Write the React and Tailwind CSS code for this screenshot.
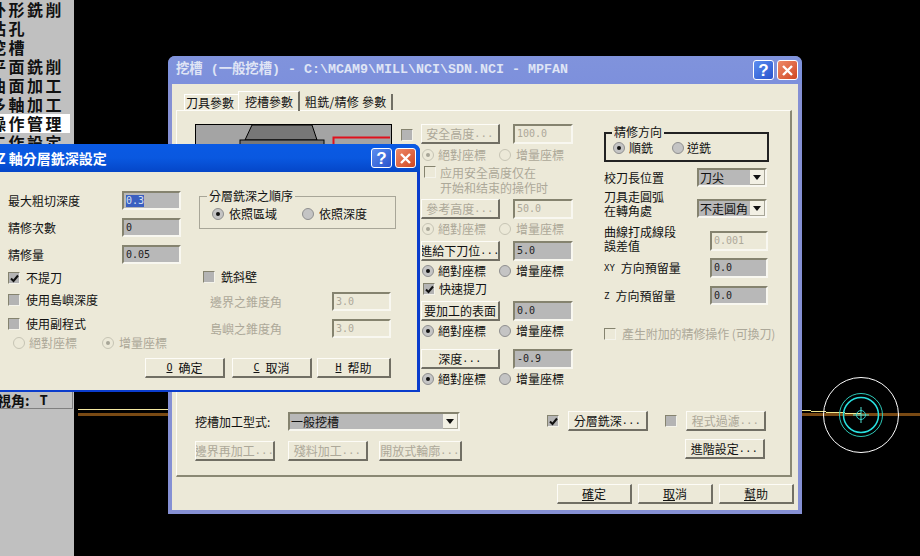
const cjk = "font-['Noto_Sans_CJK_TC','Liberation_Sans',sans-serif]";
const mono = "font-['DejaVu_Sans_Mono','Noto_Sans_CJK_TC',monospace]";

function Btn({ w = 79, h = 20, off, children, dots, className = "" }) {
  return (
    <div
      style={{ width: w, height: h }}
      className={`flex shrink-0 items-center justify-center whitespace-nowrap overflow-hidden bg-[#ece9d8] border border-t-[#fdfcf7] border-l-[#fdfcf7] border-r-2 border-b-2 border-r-[#716f64] border-b-[#716f64] text-[12px] leading-[14px] ${off ? "text-[#aca899]" : "text-[#111]"} ${className}`}
    >
      {children}
      {dots && <span className={`${mono} text-[10px] tracking-[0.5px]`}>...</span>}
    </div>
  );
}

function Field({ w = 60, h = 20, off, sel, value, className = "" }) {
  return (
    <div
      style={{ width: w, height: h }}
      className={`flex shrink-0 items-center pl-[2px] border-2 border-t-[#85836f] border-l-[#85836f] border-r-[#f8f7f0] border-b-[#f8f7f0] ${mono} text-[10px] leading-[12px] ${off ? "bg-[#ece9d8] text-[#aca899]" : "bg-[#b8b8b8] text-[#222]"} ${className}`}
    >
      <span className={sel ? "bg-[#3a5fc0] text-[#d8e0f0]" : ""}>{value}</span>
    </div>
  );
}

function Check({ on, off, className = "" }) {
  return (
    <div
      className={`flex h-[12px] w-[12px] shrink-0 items-center justify-center border border-t-[#85836f] border-l-[#85836f] border-r-[#f4f3ea] border-b-[#f4f3ea] ${off ? "bg-[#ece9d8]" : "bg-[#b4b4b4]"} ${className}`}
    >
      {on && (
        <svg width="9" height="9" viewBox="0 0 9 9">
          <path d="M1 4.5 L3.5 7 L8 1.5" fill="none" stroke="#111" strokeWidth="2" />
        </svg>
      )}
    </div>
  );
}

function Radio({ on, off }) {
  return (
    <div
      className={`flex h-[12px] w-[12px] shrink-0 items-center justify-center rounded-full border ${off ? "border-[#c6c4b4] bg-[#ece9d8]" : "border-[#8f8f8f] bg-[#c4c4c4]"}`}
    >
      {on && <div className={`h-[4px] w-[4px] rounded-full ${off ? "bg-[#a8a698]" : "bg-[#111]"}`} />}
    </div>
  );
}

function RadioPair({ off, first = true, a = "絕對座標", b = "增量座標", gap = 13, className = "" }) {
  return (
    <div className={`flex h-[14px] items-center text-[12px] leading-[14px] ${off ? "text-[#aca899]" : "text-[#111]"} ${className}`}>
      <Radio on={first} off={off} />
      <span className="ml-[4px] whitespace-nowrap">{a}</span>
      <div style={{ width: gap }} className="shrink-0" />
      <Radio on={!first} off={off} />
      <span className="ml-[5px] whitespace-nowrap">{b}</span>
    </div>
  );
}

function Select({ w, value, className = "" }) {
  return (
    <div
      style={{ width: w }}
      className={`flex h-[19px] shrink-0 items-center justify-between border-2 border-t-[#85836f] border-l-[#85836f] border-r-[#f8f7f0] border-b-[#f8f7f0] bg-[#b8b8b8] pl-[1px] text-[12px] leading-[14px] text-[#111] ${className}`}
    >
      <span className="whitespace-nowrap">{value}</span>
      <div className="flex h-[15px] w-[15px] items-center justify-center border-r border-b border-[#a8a698] bg-[#f2f0e4]">
        <svg width="8" height="5" viewBox="0 0 8 5"><path d="M0 0 H8 L4 5 Z" fill="#111" /></svg>
      </div>
    </div>
  );
}

function WinBtns() {
  return (
    <div className="flex items-center gap-[3px]">
      <div className={`flex h-[20px] w-[21px] items-center justify-center rounded-[3px] border border-white bg-gradient-to-br from-[#5c8ef0] to-[#2a52cc] text-[17px] font-bold leading-none text-white ${"font-['Liberation_Sans',sans-serif]"}`}>?</div>
      <div className="flex h-[20px] w-[21px] items-center justify-center rounded-[3px] border border-white bg-gradient-to-br from-[#ee8a68] to-[#d0451f]">
        <svg width="13" height="13" viewBox="0 0 13 13"><path d="M2 2 L11 11 M11 2 L2 11" stroke="#fff" strokeWidth="2.4" /></svg>
      </div>
    </div>
  );
}

function Sidebar() {
  const items = ["外形銑削", "钻孔", "挖槽", "平面銑削", "曲面加工", "多軸加工", "操作管理", "工作設定"];
  return (
    <div className="flex h-full w-[74px] shrink-0 flex-col overflow-hidden bg-[#c0c0c0]">
      <div className="h-[392px] shrink-0">
        {items.map((t) => (
          <div
            key={t}
            className={`-ml-[10px] flex h-[19px] w-[80px] items-center text-[16px] font-bold leading-[19px] tracking-[2.5px] text-[#111] whitespace-nowrap ${t === "操作管理" ? "bg-white" : ""}`}
          >
            {t}
          </div>
        ))}
      </div>
      <div className="flex h-[17px] w-[73px] shrink-0 items-center overflow-hidden border-r border-b border-[#808080] bg-[#c0c0c0] text-[14px] font-bold leading-[16px] text-[#111] whitespace-nowrap">
        <span className="-ml-[3px]">視角:</span><span className={`${mono} ml-[10px] text-[14px]`}>T</span>
      </div>
    </div>
  );
}

function ToolPicture() {
  return (
    <svg width="197" height="150" viewBox="0 0 197 150" className="block">
      <rect x="0.5" y="0.5" width="196" height="149" fill="#a4a4a4" stroke="#000" />
      <path d="M57 1 H117 L122 16 H50 Z" fill="#777" stroke="#000" />
      <rect x="45" y="16" width="84" height="30" fill="#777" stroke="#000" />
      <path d="M195 13.5 H138.5 V60" fill="none" stroke="#e0101c" strokeWidth="2" />
    </svg>
  );
}

function MainDialog() {
  return (
    <div className="absolute left-[168px] top-[56px] h-[458px] w-[634px] overflow-hidden rounded-t-[7px] bg-[#8590d4]">
      <div className={`flex h-[28px] items-center bg-gradient-to-b from-[#8093dc] to-[#7d90dc] pl-[8px] pr-[4px] text-[13.33px] font-bold leading-[16px] text-[#dfe4f5] whitespace-pre ${"font-['Liberation_Mono','Noto_Sans_CJK_TC',monospace]"}`}>
        <span className="flex-1">挖槽 (一般挖槽) - C:\MCAM9\MILL\NCI\SDN.NCI - MPFAN</span>
        <WinBtns />
      </div>
      <div className="mx-[4px] h-[426px] bg-[#ece9d8] px-[4px] pt-[7px]">
        <div className="flex h-[19px] items-end pl-[8px] text-[12px] leading-[14px] text-[#111]">
          <div className="flex h-[16px] w-[54px] items-center border-t border-l border-white pl-[1px]">刀具參數</div>
          <div className="relative z-10 -mb-[1px] flex h-[20px] w-[62px] items-center border-t border-l border-r-2 border-white border-r-[#716f64] pl-[6px]">挖槽參數</div>
          <div className="ml-[3px] flex h-[16px] w-[90px] items-center border-r-2 border-[#716f64] pl-[2px] whitespace-pre tracking-[0.25px]">粗銑/精修 參數</div>
        </div>
        <div className="h-[367px] w-[616px] border border-t-[#fdfcf7] border-l-[#fdfcf7] border-r-2 border-b-2 border-r-[#8a8874] border-b-[#8a8874] text-[12px] leading-[14px] text-[#111]">
          <div className="flex h-[300px] pl-[18px] pt-[13px]">
            <div className="w-[205px] shrink-0"><ToolPicture /></div>
            <div className="w-[204px] shrink-0">
              <div className="flex h-[20px] items-center pl-[1px]">
                <Check className="mt-[1px]" />
                <Btn off dots className="ml-[8px]">安全高度</Btn>
                <Field off value="100.0" className="ml-[13px]" />
              </div>
              <RadioPair off className="ml-[22px] mt-[4px]" />
              <div className="ml-[24px] mt-[3px] flex h-[30px] text-[#aca899]">
                <Check off className="mt-[1px]" />
                <span className="ml-[4px] leading-[15px] whitespace-pre">应用安全高度仅在{"\n"}开始和结束的操作时</span>
              </div>
              <div className="ml-[21px] mt-[4px] flex">
                <Btn off dots>參考高度</Btn>
                <Field off value="50.0" className="ml-[13px]" />
              </div>
              <RadioPair off className="ml-[22px] mt-[3px]" />
              <div className="ml-[21px] mt-[5px] flex">
                <Btn dots>進給下刀位</Btn>
                <Field value="5.0" className="ml-[13px]" />
              </div>
              <RadioPair className="ml-[22px] mt-[3px]" />
              <div className="ml-[23px] mt-[4px] flex h-[14px] items-center">
                <Check on />
                <span className="ml-[4px]">快速提刀</span>
              </div>
              <div className="ml-[21px] mt-[5px] flex">
                <Btn>要加工的表面</Btn>
                <Field value="0.0" className="ml-[13px]" />
              </div>
              <RadioPair className="ml-[22px] mt-[3px]" />
              <div className="ml-[21px] mt-[11px] flex">
                <Btn dots>深度</Btn>
                <Field value="-0.9" className="ml-[13px]" />
              </div>
              <RadioPair className="ml-[22px] mt-[3px]" />
            </div>
            <div className="w-[165px] shrink-0">
              <div className="relative mt-[8px] flex h-[30px] items-center border-2 border-[#222] pl-[7px] pt-[1px]">
                <span className="absolute -top-[9px] left-[6px] bg-[#ece9d8] px-[2px]">精修方向</span>
                <Radio on /><span className="ml-[4px] mr-[19px]">順銑</span>
                <Radio /><span className="ml-[3px]">逆銑</span>
              </div>
              <div className="mt-[6px] flex items-center justify-between pr-[2px]">
                <span>校刀長位置</span><Select w={70} value="刀尖" />
              </div>
              <div className="mt-[3px] flex h-[28px] items-start justify-between pr-[2px]">
                <span className="whitespace-pre leading-[14px]">刀具走圓弧{"\n"}在轉角處</span>
                <Select w={70} value="不走圓角" className="mt-[9px]" />
              </div>
              <div className="mt-[7px] flex h-[28px] items-start justify-between pr-[1px]">
                <span className="whitespace-pre leading-[14px]">曲線打成線段{"\n"}誤差值</span>
                <Field off w={58} value="0.001" className="mt-[6px]" />
              </div>
              <div className="mt-[5px] flex h-[20px] items-center justify-between pr-[1px]">
                <span className="flex items-center whitespace-pre"><span className={`${mono} mr-[6px] text-[9px]`}>XY</span>方向預留量</span>
                <Field w={58} value="0.0" />
              </div>
              <div className="mt-[8px] flex h-[19px] items-center justify-between pr-[1px]">
                <span className="flex items-center whitespace-pre"><span className={`${mono} mr-[6px] text-[9px]`}>Z</span>方向預留量</span>
                <Field w={58} h={19} value="0.0" />
              </div>
              <div className="mt-[22px] flex h-[14px] items-center whitespace-nowrap text-[#aca899]">
                <Check off />
                <span className="ml-[6px] text-[12px] tracking-[-0.1px]">產生附加的精修操作 (可換刀)</span>
              </div>
            </div>
          </div>
          <div className="flex pl-[18px]">
            <div className="w-[352px] shrink-0">
              <div className="mt-[1px] flex h-[19px] items-center">
                <span className="w-[93px] shrink-0">挖槽加工型式:</span>
                <Select w={172} value="一般挖槽" />
              </div>
              <div className="mt-[10px] flex">
                <Btn off dots w={80}>邊界再加工</Btn>
                <Btn off dots w={80} className="ml-[13px]">殘料加工</Btn>
                <Btn off dots w={83} className="ml-[11px]">開放式輪廓</Btn>
              </div>
            </div>
            <div className="w-[218px] shrink-0">
              <div className="flex h-[20px] items-center">
                <Check on />
                <Btn dots w={80} className="ml-[9px]">分層銑深</Btn>
                <Check className="ml-[17px]" />
                <Btn off dots w={80} className="ml-[9px]">程式過濾</Btn>
              </div>
              <div className="mt-[8px] flex justify-end">
                <Btn dots w={80}>進階設定</Btn>
              </div>
            </div>
          </div>
        </div>
        <div className="mt-[7px] flex justify-end gap-[6px]">
          <Btn w={75}><span className="underline">確</span>定</Btn>
          <Btn w={75}><span className="underline">取</span>消</Btn>
          <Btn w={75}><span className="underline">幫</span>助</Btn>
        </div>
      </div>
    </div>
  );
}

function Accel({ k, children }) {
  return (
    <span className="flex items-center whitespace-pre">
      <span className={`${mono} mr-[6px] text-[10px] underline`}>{k}</span>{children}
    </span>
  );
}

function DepthDialog() {
  return (
    <div className="absolute left-[-10px] top-[144px] h-[248px] w-[430px] overflow-hidden rounded-t-[7px] bg-[#0a3ccc]">
      <div className="flex h-[28px] items-center bg-gradient-to-b from-[#0a5ae4] via-[#0a58e0] to-[#0546c8] pl-[7px] pr-[4px] text-[14px] font-bold leading-[16px] text-white whitespace-pre">
        <span className="flex-1">Z 軸分層銑深設定</span>
        <WinBtns />
      </div>
      <div className="mx-[3px] h-[218px] bg-[#ece9d8] text-[12px] leading-[14px] text-[#111]">
        <div className="flex pl-[15px] pt-[19px]">
          <div className="w-[191px] shrink-0">
            <div className="flex h-[19px] items-center"><span className="w-[114px] shrink-0">最大粗切深度</span><Field w={59} h={19} value="0.3" sel /></div>
            <div className="mt-[8px] flex h-[19px] items-center"><span className="w-[114px] shrink-0">精修次數</span><Field w={59} h={19} value="0" /></div>
            <div className="mt-[8px] flex h-[19px] items-center"><span className="w-[114px] shrink-0">精修量</span><Field w={59} h={19} value="0.05" /></div>
            <div className="mt-[8px] flex h-[12px] items-center"><Check on /><span className="ml-[6px]">不提刀</span></div>
            <div className="mt-[10px] flex h-[12px] items-center"><Check /><span className="ml-[6px]">使用島嶼深度</span></div>
            <div className="mt-[12px] flex h-[12px] items-center"><Check /><span className="ml-[6px]">使用副程式</span></div>
            <RadioPair off first={false} gap={25} className="ml-[5px] mt-[6px]" />
          </div>
          <div className="w-[197px] shrink-0">
            <div className="relative mt-[5px] flex h-[33px] items-center border border-[#a8a698] pl-[12px] pt-[3px]">
              <span className="absolute -top-[8px] left-[7px] bg-[#ece9d8] px-[2px]">分層銑深之順序</span>
              <Radio on /><span className="ml-[5px] mr-[25px]">依照區域</span>
              <Radio /><span className="ml-[5px]">依照深度</span>
            </div>
            <div className="ml-[4px] mt-[42px] flex h-[12px] items-center"><Check /><span className="ml-[6px]">銑斜壁</span></div>
            <div className="ml-[11px] mt-[9px] flex h-[19px] items-center text-[#aca899]"><span className="w-[122px] shrink-0">邊界之錐度角</span><Field off w={59} h={19} value="3.0" /></div>
            <div className="ml-[11px] mt-[8px] flex h-[19px] items-center text-[#aca899]"><span className="w-[122px] shrink-0">島嶼之錐度角</span><Field off w={59} h={19} value="3.0" /></div>
          </div>
        </div>
        <div className="ml-[152px] mt-[8px] flex">
          <Btn w={80}><Accel k="O">确定</Accel></Btn>
          <Btn w={80} className="ml-[7px]"><Accel k="C">取消</Accel></Btn>
          <Btn w={74} className="ml-[5px]"><Accel k="H">帮助</Accel></Btn>
        </div>
      </div>
    </div>
  );
}

function CadDrawing() {
  return (
    <svg width="920" height="556" viewBox="0 0 920 556" className="absolute left-0 top-0">
      <path d="M78 409.5 H168" stroke="#f4e8a0" strokeWidth="1" />
      <path d="M78 414.5 H168 M802 414.5 H920" stroke="#7a4a14" strokeWidth="3" />
      <path d="M802 410.5 H811 M811 411.5 H826 M826 412.5 H845 M845 413.5 H861" fill="none" stroke="#f0e890" strokeWidth="1" />
      <circle cx="861" cy="415" r="37.5" fill="none" stroke="#fff" />
      <circle cx="861" cy="415" r="21.5" fill="none" stroke="#2ec8b8" />
      <circle cx="861" cy="415" r="17.5" fill="none" stroke="#28e0e0" strokeWidth="1.5" />
      <circle cx="861" cy="415" r="4.5" fill="none" stroke="#28c8c8" />
      <path d="M853 415 H869 M861 407 V423" stroke="#50e0d0" />
    </svg>
  );
}

export default function App() {
  return (
    <div className={`relative flex h-[556px] w-[920px] overflow-hidden bg-black ${cjk}`}>
      <CadDrawing />
      <Sidebar />
      <MainDialog />
      <DepthDialog />
    </div>
  );
}
